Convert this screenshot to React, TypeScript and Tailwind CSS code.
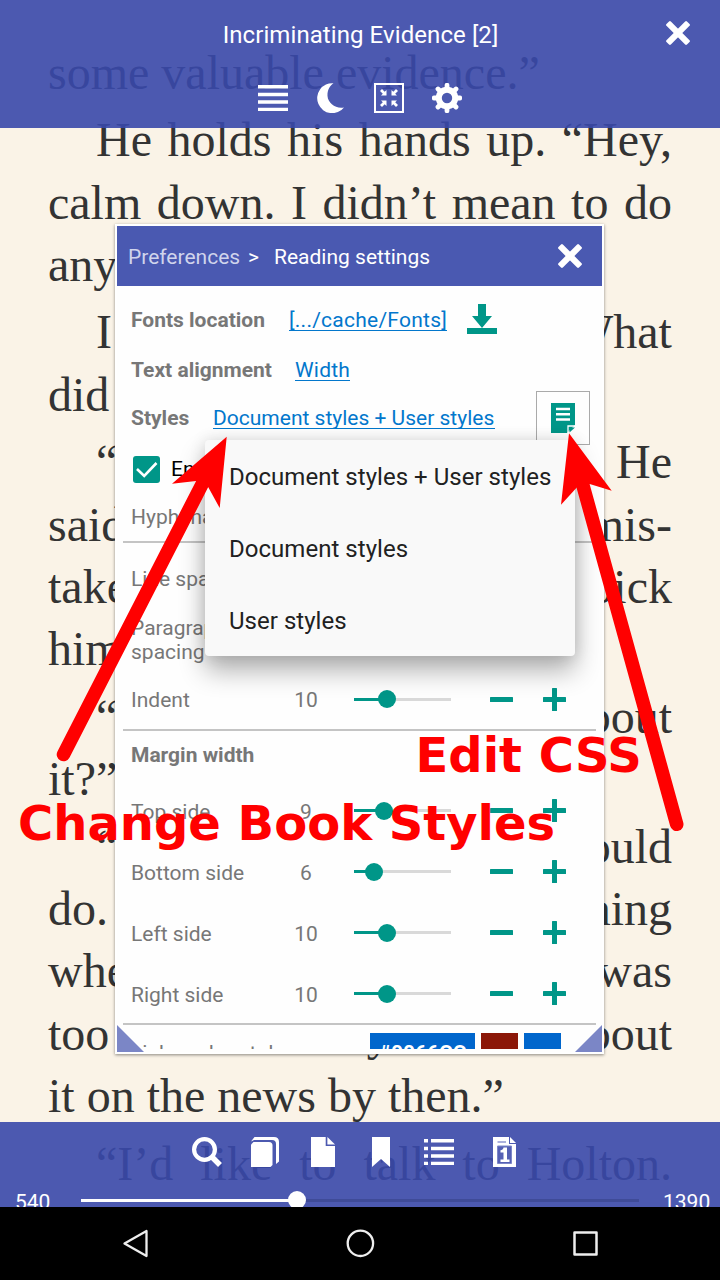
import type { ReactNode } from "react";

type Line = { text: string; indent?: boolean; left?: boolean };

const paragraphs: Line[][] = [
  [{ text: "some valuable evidence.”", left: true }],
  [
    { text: "He holds his hands up. “Hey,", indent: true },
    { text: "calm down. I didn’t mean to do" },
    { text: "anything.”", left: true },
  ],
  [
    { text: "I look at him. “What", indent: true },
    { text: "did", left: true },
  ],
  [
    { text: "“ He", indent: true },
    { text: "said mis-" },
    { text: "take pick" },
    { text: "him.", left: true },
  ],
  [
    { text: "“ about", indent: true },
    { text: "it?”", left: true },
  ],
  [
    { text: "“ would", indent: true },
    { text: "do. thing" },
    { text: "when was" },
    { text: "too many about" },
    { text: "it on the news by then.”", left: true },
  ],
  [{ text: "“I’d like to talk to Holton.", indent: true }],
];

function BookPage() {
  return (
    <div className="h-full overflow-hidden pl-12 pr-12 pt-[41.7px] font-['Liberation_Serif',serif] text-[48px] text-[#333333]">
      {paragraphs.map((lines, i) => (
        <div key={i} className="mb-[5.3px]">
          {lines.map((line) => (
            <div
              key={line.text}
              className={
                "flex h-[62.3px] whitespace-pre leading-[62.3px] " +
                (line.indent ? "pl-12 " : "") +
                (line.left ? "justify-start gap-3" : "justify-between")
              }
            >
              {line.text.split(" ").map((word, k) => (
                <span key={k}>{word}</span>
              ))}
            </div>
          ))}
        </div>
      ))}
    </div>
  );
}

function CloseIcon() {
  return (
    <svg className="size-6 shrink-0" viewBox="0 0 24 24" fill="white">
      <rect x="-2.500" y="8.900" width="29" height="6.200" rx="1.300" transform="rotate(45 12 12)" />
      <rect x="-2.500" y="8.900" width="29" height="6.200" rx="1.300" transform="rotate(-45 12 12)" />
    </svg>
  );
}

function TopBar() {
  return (
    <header className="absolute inset-x-0 top-0 flex h-32 flex-col bg-[#3948aa]/90 text-white">
      <div className="flex h-[70px] items-center pl-[55px] pr-[30px]">
        <h1 className="flex-1 text-center text-[24px] tracking-[0.08px]">Incriminating Evidence [2]</h1>
        <div className="pb-1">
          <CloseIcon />
        </div>
      </div>
      <div className="flex justify-center gap-7 pt-[13px]">
        <svg className="size-[30px]" viewBox="0 0 30 30" fill="white">
          <path d="M0 2h30v3.500H0zM0 9.700h30v3.500H0zM0 17.200h30v3.500H0zM0 24.700h30V28H0z" />
        </svg>
        <svg className="size-[30px]" viewBox="0 0 30 30" fill="white">
          <path d="M17.500 .2A15 15 0 1 0 28 24.400C20 26 12 20.500 11.500 13 11.200 7.500 13.500 3 17.500 .2z" />
        </svg>
        <svg className="size-[30px]" viewBox="0 0 30 30" fill="white">
          <path d="M0 0v30h30V0zM2 2h26v26H2z" fillRule="evenodd" />
          <path d="M12.500 12.500H7l1.800-1.800L6 8l2-2 2.700 2.800L12.500 7zM17.500 12.500H23l-1.800-1.800L24 8l-2-2-2.700 2.800L17.500 7zM12.500 17.500H7l1.800 1.800L6 22l2 2 2.700-2.800 1.800 1.800zM17.500 17.500H23l-1.800 1.800L24 22l-2 2-2.700-2.800-1.800 1.800z" />
        </svg>
        <svg className="size-[30px]" viewBox="0 0 30 30" fill="none" stroke="white">
          <circle cx="15" cy="15" r="8.200" strokeWidth="6" />
          <path
            d="M15 2.200v3M15 24.800v3M2.200 15h3M24.800 15h3M6 6l2 2M22 22l2 2M24 6l-2 2M8 22l-2 2"
            strokeWidth="4.800"
            strokeLinecap="round"
          />
        </svg>
      </div>
    </header>
  );
}

function BottomBar() {
  return (
    <footer className="absolute inset-x-0 bottom-[73px] flex h-[85px] flex-col overflow-hidden bg-[#3948aa]/90 text-white">
      <div className="flex h-[60px] shrink-0 items-center justify-center gap-7 pr-2">
        <svg className="size-[30px]" viewBox="0 0 30 30" fill="none" stroke="white">
          <circle cx="12.500" cy="12.500" r="10.400" strokeWidth="4.200" />
          <path d="m19.500 19.500 8.500 8.500" strokeWidth="5.500" />
        </svg>
        <svg className="size-[30px]" viewBox="0 0 30 30" fill="white">
          <path d="M1 7.500 3.500 5H19q3.500 0 3.500 3.500V28l-2 2H1z" />
          <path d="M1 4.500 4.500 0H24q5 0 5 5v19.500L26 27V7q0-4-4-4H4z" />
        </svg>
        <svg className="size-[30px]" viewBox="0 0 30 30" fill="white">
          <path d="M3 0h14.700v9H27v21H3z" />
          <path d="m19.400 0 7.600 7.600h-7.600z" />
        </svg>
        <svg className="size-[30px]" viewBox="0 0 30 30" fill="white">
          <path d="M6 0h18v30l-9-8-9 8z" />
        </svg>
        <svg className="size-[30px]" viewBox="0 0 30 30" fill="white">
          <path d="M0 2h4v3.500H0zM0 9.700h4v3.500H0zM0 17.200h4v3.500H0zM0 24.700h4V28H0zM7 2h23v3.500H7zM7 9.700h23v3.500H7zM7 17.200h23v3.500H7zM7 24.700h23V28H7z" />
        </svg>
        <svg className="ml-2 size-[30px]" viewBox="0 0 30 30">
          <path d="M3 0h16v7h7v23H3z" fill="white" />
          <path d="m20 0 6 6h-6z" fill="white" />
          <path d="M7.500 5h8.500" stroke="#8f97d0" strokeWidth="1.500" />
          <path d="M7.500 9h14v17.500h-14z" fill="#5560b4" stroke="#7d87c8" />
          <path d="M13.500 10.500H17V22.500h2.500V25h-9v-2.500h3v-7h-3v-2.200q2.500 0 3-2.800z" fill="white" />
        </svg>
      </div>
      <div className="flex h-9 shrink-0 items-center text-[21px]">
        <span className="w-[81px] pl-[15px] pt-1.5">540</span>
        <div className="relative flex h-[18px] flex-1 items-center">
          <div className="h-[3px] w-[216px] bg-white" />
          <div className="h-[3px] flex-1 bg-[#3f4b98]" />
          <div className="absolute left-[207px] size-[18px] rounded-full bg-white" />
        </div>
        <span className="w-[81px] pl-6 pt-1.5">1390</span>
      </div>
    </footer>
  );
}

function SystemNav() {
  return (
    <nav className="absolute inset-x-0 bottom-0 flex h-[73px] items-center justify-between bg-black px-[120px] pb-0.5">
      <svg className="size-[30px]" viewBox="0 0 30 30" fill="none" stroke="#eeeeee" strokeWidth="2.300" strokeLinejoin="round">
        <path d="M4.500 15.500 26.500 3v25z" />
      </svg>
      <svg className="size-[30px]" viewBox="0 0 30 30" fill="none" stroke="#eeeeee" strokeWidth="2.300">
        <circle cx="15.400" cy="15.300" r="12.700" />
      </svg>
      <svg className="size-[30px]" viewBox="0 0 30 30" fill="none" stroke="#eeeeee" strokeWidth="2.500" strokeLinejoin="round">
        <path d="M4.500 4.500h22v22h-22z" />
      </svg>
    </nav>
  );
}

function Divider() {
  return <div className="mx-1.5 h-0.5 shrink-0 bg-[#c4c4c4]" />;
}

function Link({ className, children }: { className: string; children: ReactNode }) {
  return (
    <a className={"whitespace-nowrap border-b border-[#0277cc] leading-5 text-[#0277cc] " + className}>
      {children}
    </a>
  );
}

function SliderRow({ label, value, className }: { label: string; value: number; className: string }) {
  const fill = { 10: 32.5, 9: 29.5, 6: 19.5 }[value] ?? 0;
  return (
    <div className={"flex shrink-0 items-center pl-3.5 " + className}>
      <span className="w-[145px] pt-0.5">{label}</span>
      <span className="w-[60px] pt-0.5 text-center">{value}</span>
      <div className="relative -mt-0.5 ml-[18px] flex h-[18px] w-[97px] items-center">
        <div className="h-[3px] bg-[#009688]" style={{ width: fill }} />
        <div className="h-[3px] flex-1 bg-[#d9d9d9]" />
        <div className="absolute size-[18px] -translate-x-1/2 rounded-full bg-[#009688]" style={{ left: fill }} />
      </div>
      <svg className="-mt-0.5 ml-[39px] h-[23px] w-[23px]" viewBox="0 0 23 23" fill="#009688">
        <rect y="9" width="23" height="5" rx=".5" />
      </svg>
      <svg className="-mt-0.5 ml-[30px] h-[23px] w-[23px]" viewBox="0 0 23 23" fill="#009688">
        <rect y="9" width="23" height="5" rx=".5" />
        <rect x="9" width="5" height="23" rx=".5" />
      </svg>
    </div>
  );
}

function SettingsDialog() {
  return (
    <section className="absolute left-[115px] top-[224px] flex h-[830px] w-[489px] flex-col border-2 border-white bg-[#fefefe] pb-[3px] shadow-[0_1px_3px_rgba(0,0,0,0.45)]">
      <div className="flex h-[60px] shrink-0 items-center bg-[#4a59b1] pl-[11px] pr-5 text-[21px] text-white">
        <span className="w-[120px] pt-[3px] text-[#d0d4ec]">Preferences</span>
        <span className="w-[26px] pt-[3px]">&gt;</span>
        <span className="flex-1 pt-[3px]">Reading settings</span>
        <CloseIcon />
      </div>
      <div className="flex min-h-0 flex-1 flex-col overflow-hidden pt-[9px] text-[21px] text-[#777777]">
        <div className="flex h-[50px] shrink-0 items-center pl-3.5">
          <span className="w-[158px] pt-0.5 font-bold">Fonts location</span>
          <Link className="w-[158px] tracking-[0.25px]">[.../cache/Fonts]</Link>
          <svg className="-mt-0.5 ml-5 size-[30px]" viewBox="0 0 30 30" fill="#009688">
            <path d="M11 0h8v12h6L15 24 5 12h6zM0 24h30v6H0z" />
          </svg>
        </div>
        <div className="flex h-[46px] shrink-0 items-center pl-3.5 pt-1">
          <span className="w-[164px] pt-0.5 font-bold">Text alignment</span>
          <Link className="w-[55px] tracking-[0.2px]">Width</Link>
        </div>
        <div className="flex h-[54px] shrink-0 items-center pl-3.5">
          <span className="w-[82px] pt-0.5 font-bold">Styles</span>
          <Link className="mt-px w-[282px]">Document styles + User styles</Link>
          <div className="ml-[41px] flex size-[54px] items-center justify-center border border-[#aaaaaa]">
            <svg className="h-[30px] w-6" viewBox="0 0 24 30" fill="none">
              <path d="M0 0h24v22h-8v8H0z" fill="#009688" />
              <path d="M16 30v-8h8" fill="#009688" />
              <path d="M17 30V23h7" stroke="white" strokeWidth="1.300" />
              <path d="M5 6h14M5 11.300h14M5 16.500h14" stroke="white" strokeWidth="2.400" />
              <path d="M18.500 29.500v-5H24z" fill="#009688" />
            </svg>
          </div>
        </div>
        <div className="flex h-12 shrink-0 items-center pl-4 text-black">
          <span className="flex size-[27px] items-center justify-center rounded-[3px] bg-[#009688]">
            <svg className="size-[27px]" viewBox="0 0 27 27" fill="none" stroke="white" strokeWidth="2.600">
              <path d="m4 13 7.200 7L23.500 7" />
            </svg>
          </span>
          <span className="ml-[11px] pt-0.5">Enable hyphenation</span>
        </div>
        <div className="flex h-12 shrink-0 items-center pl-3.5 pt-0.5">Hyphenation</div>
        <Divider />
        <div className="flex h-[72px] shrink-0 items-center pl-3.5 pt-0.5">Line spacing</div>
        <div className="flex h-[50px] shrink-0 items-center pl-3.5">
          <span className="w-[120px] leading-6">Paragraph spacing</span>
        </div>
        <SliderRow label="Indent" value={10} className="h-16 pt-1.5" />
        <Divider />
        <div className="flex h-[50px] shrink-0 items-center pl-3.5 font-bold">Margin width</div>
        <SliderRow label="Top side" value={9} className="h-[61px]" />
        <SliderRow label="Bottom side" value={6} className="h-[61px]" />
        <SliderRow label="Left side" value={10} className="h-[61px]" />
        <SliderRow label="Right side" value={10} className="-mb-0.5 h-[61px]" />
        <Divider />
        <div className="flex h-10 shrink-0 items-start pl-3.5 pt-2">
          <span className="w-[239px] pt-[5px]">Links color at day</span>
          <span className="h-8 w-[105px] bg-[#0066cc] pt-[5px] text-center font-bold text-white">#0066CC</span>
          <span className="ml-1.5 h-8 w-[37px] bg-[#8b1708]" />
          <span className="ml-1.5 h-8 w-[37px] bg-[#0066cc]" />
        </div>
      </div>
      <svg className="absolute bottom-0 left-0 size-[27px]" viewBox="0 0 27 27" fill="#7b86c6">
        <path d="M0 0v27h27z" />
      </svg>
      <svg className="absolute bottom-0 right-0 size-[27px]" viewBox="0 0 27 27" fill="#7b86c6">
        <path d="M27 0v27H0z" />
      </svg>
    </section>
  );
}

function StylesMenu() {
  return (
    <ul className="absolute left-[205px] top-[440px] flex w-[370px] flex-col rounded-sm bg-[#f9f9f9] text-[24px] tracking-[0.03px] text-[#212121] shadow-[0_15px_26px_rgba(0,0,0,0.3),0_0_16px_rgba(0,0,0,0.12)]">
      {["Document styles + User styles", "Document styles", "User styles"].map((item) => (
        <li key={item} className="flex h-[72px] items-center whitespace-nowrap pl-6 pt-0.5">
          {item}
        </li>
      ))}
    </ul>
  );
}

function Annotations() {
  return (
    <div className="absolute inset-0 font-['DejaVu_Sans',sans-serif] text-[48px] font-bold leading-none text-[#ff0000]">
      <svg className="absolute inset-0 h-full w-full" viewBox="0 0 720 1280" fill="#ff0000">
        <path d="M63.500 754.500 205 478.500" stroke="#ff0000" strokeWidth="13.600" strokeLinecap="round" />
        <path d="M226.700 436.700 172 483.700 196 481 208.300 487.300 219.700 508z" />
        <path d="M676.700 824.300 582 482" stroke="#ff0000" strokeWidth="13.600" strokeLinecap="round" />
        <path d="M569 433.300 561 504.700 577 487.300 589.700 484 611.700 490.700z" />
      </svg>
      <p className="absolute left-[415.500px] top-[731px] whitespace-nowrap">Edit CSS</p>
      <p className="absolute left-[18px] top-[799px] whitespace-nowrap">Change Book Styles</p>
    </div>
  );
}

export default function App() {
  return (
    <main className="relative h-[1280px] w-[720px] overflow-hidden bg-[#faf3e7] font-[Roboto,sans-serif]">
      <BookPage />
      <TopBar />
      <BottomBar />
      <SettingsDialog />
      <StylesMenu />
      <SystemNav />
      <Annotations />
    </main>
  );
}
